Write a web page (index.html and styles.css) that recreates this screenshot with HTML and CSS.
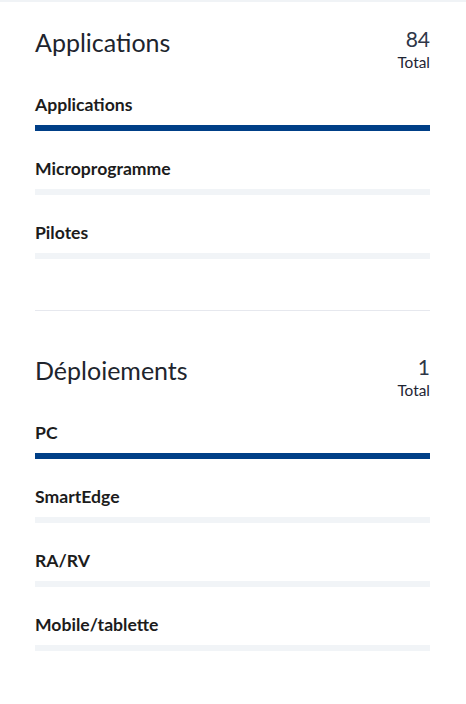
FILE: index.html
```html
<!DOCTYPE html>
<html lang="fr">
<head>
    <meta charset="UTF-8">
    <meta name="viewport" content="width=device-width, initial-scale=1.0">
    <title>Résumé</title>
    <link rel="stylesheet" href="styles.css">
</head>
<body>

    <div class="panel">
        <section class="summary">
            <div class="summary-header">
                <h2>Applications</h2>
                <div class="summary-count">
                    <div class="count">84</div>
                    <div class="count-label">Total</div>
                </div>
            </div>
            <div class="summary-row">
                <div class="row-label">Applications</div>
                <div class="bar"><div class="bar-fill" style="width: 100%"></div></div>
            </div>
            <div class="summary-row">
                <div class="row-label">Microprogramme</div>
                <div class="bar"><div class="bar-fill" style="width: 0%"></div></div>
            </div>
            <div class="summary-row">
                <div class="row-label">Pilotes</div>
                <div class="bar"><div class="bar-fill" style="width: 0%"></div></div>
            </div>
        </section>

        <section class="summary">
            <div class="summary-header">
                <h2>Déploiements</h2>
                <div class="summary-count">
                    <div class="count">1</div>
                    <div class="count-label">Total</div>
                </div>
            </div>
            <div class="summary-row">
                <div class="row-label">PC</div>
                <div class="bar"><div class="bar-fill" style="width: 100%"></div></div>
            </div>
            <div class="summary-row">
                <div class="row-label">SmartEdge</div>
                <div class="bar"><div class="bar-fill" style="width: 0%"></div></div>
            </div>
            <div class="summary-row">
                <div class="row-label">RA/RV</div>
                <div class="bar"><div class="bar-fill" style="width: 0%"></div></div>
            </div>
            <div class="summary-row">
                <div class="row-label">Mobile/tablette</div>
                <div class="bar"><div class="bar-fill" style="width: 0%"></div></div>
            </div>
        </section>
    </div>

</body>
</html>
```

FILE: styles.css
```css
body {
    font-family: Lato, "Open Sans", sans-serif;
    background-color: white;
    color: #1c1f26;
    margin: 0;
    padding: 0;
    border-top: 2px solid #f0f3f6;
}
.panel {
    padding: 0 36px 0 35px;
}
.summary {
    padding: 26px 0 51px;
}
.summary + .summary {
    border-top: 1px solid #e6e8ee;
    padding-top: 45px;
}
.summary-header {
    display: flex;
    justify-content: space-between;
    align-items: flex-start;
    margin-bottom: 21px;
}
.summary-header h2 {
    margin: 0;
    font-size: 25px;
    line-height: 28px;
    font-weight: normal;
    color: #20242d;
}
.summary-count {
    text-align: right;
}
.count {
    font-size: 21px;
    line-height: 22px;
    color: #2e3647;
}
.count-label {
    font-size: 15.4px;
    line-height: 22px;
    margin-top: 1px;
    color: #1f2533;
}
.summary-row {
    margin-bottom: 27px;
}
.summary-row:last-child {
    margin-bottom: 0;
}
.row-label {
    font-size: 17.6px;
    line-height: 22px;
    font-weight: bold;
    color: #1c1c1c;
}
.bar {
    margin-top: 9px;
    height: 6px;
    background-color: #f1f4f7;
}
.bar-fill {
    height: 100%;
    background-color: #003f87;
}
```
